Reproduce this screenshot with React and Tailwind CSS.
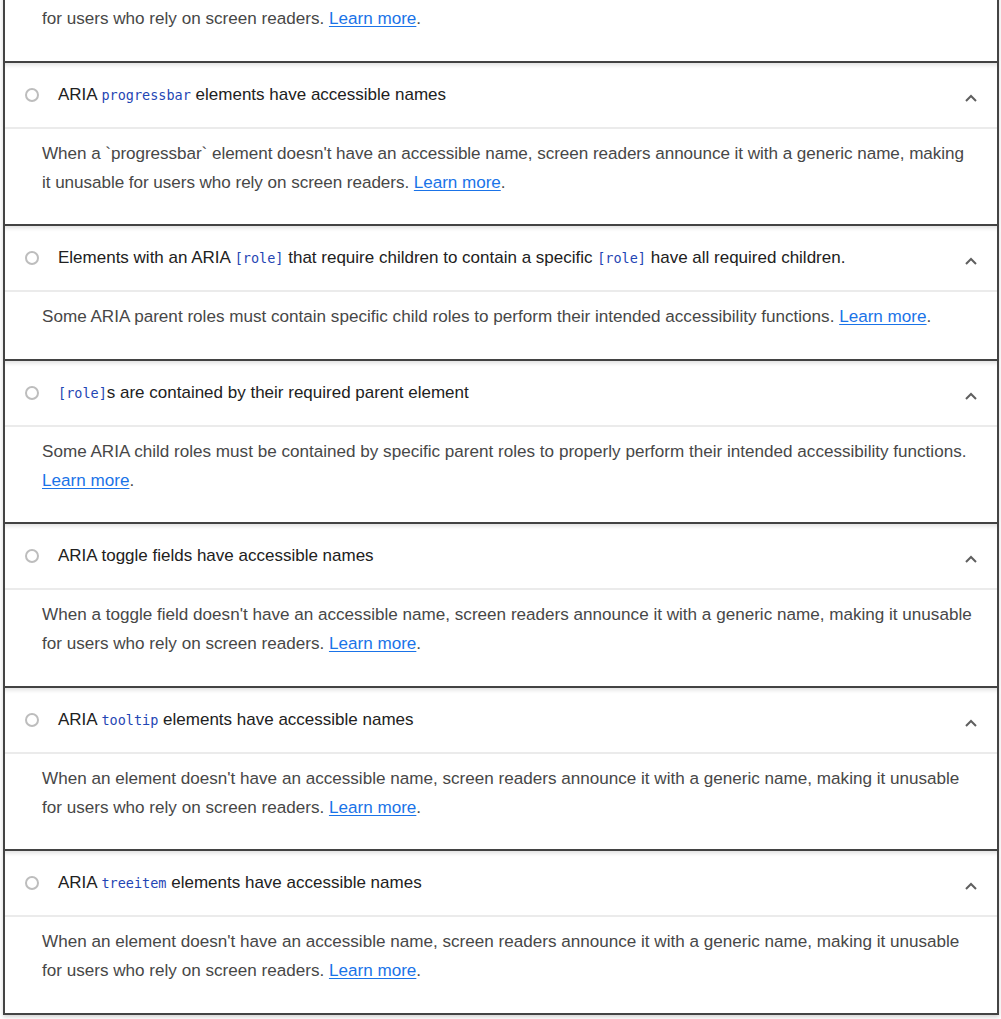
import React from "react";

const Code = ({ children }) => (
  <code className="font-['DejaVu_Sans_Mono',monospace] text-[13.5px] text-[#1f46b4]">{children}</code>
);

const Link = () => (
  <>
    <a href="#" className="text-[#1a73e8] underline underline-offset-2">Learn more</a>.
  </>
);

const Circle = () => (
  <span className="w-[14px] h-[14px] rounded-full border-[2.5px] border-[#bdbdbd] shrink-0 box-border" />
);

const Chevron = () => (
  <svg width="12" height="8" viewBox="0 0 12 8" className="shrink-0 mt-[6px]">
    <polyline points="1,7 6,2 11,7" fill="none" stroke="#5f5f5f" strokeWidth="2" />
  </svg>
);

const Card = ({ title, body, className = "", bodyClass = "pr-[20px]" }) => (
  <div className={"bg-white border-x-2 border-b-2 border-[#444] shadow-[0_2px_4px_rgba(0,0,0,0.18)] " + className}>
    <div className="h-[64px] flex items-center pl-[20px] pr-[20px] shadow-[inset_0_5px_4px_-3px_rgba(0,0,0,0.13)]">
      <Circle />
      <div className="ml-[19px] flex-1 text-[17px] leading-[24px] text-[#212121]">{title}</div>
      <Chevron />
    </div>
    <div className="h-[2px] bg-[#ebebeb]" />
    <div className={"pl-[37px] pt-[10px] pb-[27.5px] text-[17.1px] leading-[29px] text-[#474747] " + bodyClass}>
      {body} <Link />
    </div>
  </div>
);

const generic =
  "When an element doesn't have an accessible name, screen readers announce it with a generic name, making it unusable for users who rely on screen readers.";

export default function App() {
  return (
    <div className="bg-white min-h-[1019px] overflow-hidden font-['Liberation_Sans',Arial,sans-serif]">
      <div className="ml-[3px] mr-[2px] pb-[6px]">
        <Card
          className="-mt-[101px]"
          title={<>ARIA <Code>meter</Code> elements have accessible names</>}
          body={generic}
        />
        <Card
          bodyClass="pr-[12px] tracking-[-0.05px]"
          title={<>ARIA <Code>progressbar</Code> elements have accessible names</>}
          body={<>When a `progressbar` element doesn't have an accessible name, screen readers announce it with a generic name, making<br />it unusable for users who rely on screen readers.</>}
        />
        <Card
          title={<>Elements with an ARIA <Code>[role]</Code> that require children to contain a specific <Code>[role]</Code> have all required children.</>}
          body="Some ARIA parent roles must contain specific child roles to perform their intended accessibility functions."
        />
        <Card
          title={<><Code>[role]</Code>s are contained by their required parent element</>}
          body="Some ARIA child roles must be contained by specific parent roles to properly perform their intended accessibility functions."
        />
        <Card
          title={<>ARIA toggle fields have accessible names</>}
          body="When a toggle field doesn't have an accessible name, screen readers announce it with a generic name, making it unusable for users who rely on screen readers."
        />
        <Card
          title={<>ARIA <Code>tooltip</Code> elements have accessible names</>}
          body={generic}
        />
        <Card
          title={<>ARIA <Code>treeitem</Code> elements have accessible names</>}
          body={generic}
        />
      </div>
    </div>
  );
}
